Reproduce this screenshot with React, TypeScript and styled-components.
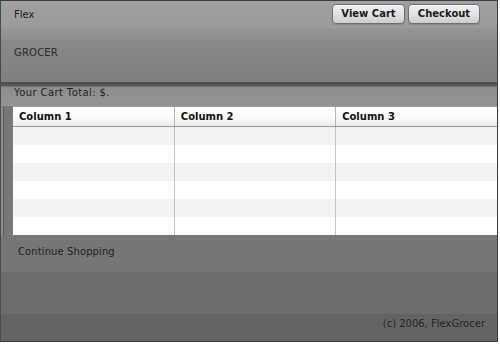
import React from 'react';
import styled, { createGlobalStyle } from 'styled-components';

const GlobalStyle = createGlobalStyle`
  html, body {
    margin: 0;
    padding: 0;
    background: #ffffff;
  }
  body {
    font-family: "DejaVu Sans", Verdana, sans-serif;
  }
`;

const Frame = styled.div`
  box-sizing: border-box;
  width: 498px;
  height: 342px;
  border: 1px solid #3c3c3c;
  border-left-color: #4a4a4a;
  box-shadow: inset 2px 0 0 #8e8e8e, inset 3px 0 0 #5a5a5a;
  display: flex;
  flex-direction: column;
  background: #777777;
  overflow: hidden;
  font-family: "DejaVu Sans", Verdana, sans-serif;
  font-size: 10px;
  color: #222222;
`;

const Header = styled.div`
  height: 81px;
  padding-left: 13px;
  display: flex;
  flex-direction: column;
  background: linear-gradient(
    to bottom,
    #a0a0a0 0px,
    #9b9b9b 27px,
    #949494 28px,
    #919191 38px,
    #898989 39px,
    #7f7f7f 81px
  );
`;

const TopBar = styled.div`
  height: 28px;
  display: flex;
  align-items: center;
  justify-content: space-between;
  padding-right: 16px;
`;

const AppName = styled.span`
  font-size: 10px;
  color: #1e1e1e;
  margin-top: -2px;
`;

const ButtonGroup = styled.div`
  display: flex;
  gap: 3px;
  margin-top: -3px;
  margin-right: 1px;
`;

const Button = styled.button<{ $width: number }>`
  box-sizing: border-box;
  width: ${p => p.$width}px;
  height: 20px;
  padding: 0;
  font-family: "DejaVu Sans", Verdana, sans-serif;
  font-weight: bold;
  font-size: 10px;
  color: #1a1a1a;
  border: 1px solid #6e6e6e;
  border-radius: 4px;
  background: linear-gradient(to bottom, #f0f0f0 0%, #e2e2e2 50%, #cdcdcd 100%);
  box-shadow: inset 0 1px 0 #fafafa, 0 1px 0 #8a8a8a;
`;

const Brand = styled.div`
  margin-top: 18px;
  font-size: 10px;
  color: #2a2a2a;
  letter-spacing: 0.2px;
`;

const Shadow = styled.div`
  height: 5px;
  background: linear-gradient(to bottom, #4c4c4c 0, #555555 3px, #7a7a7a 5px);
`;

const CartBar = styled.div`
  height: 19px;
  padding-left: 13px;
  display: flex;
  align-items: flex-start;
  background: linear-gradient(to bottom, #8e8e8e, #949494);
  color: #1e1e1e;
  line-height: 11px;
  letter-spacing: 0.4px;
`;

const GridWrap = styled.div`
  margin-left: 11px;
  background: #ffffff;
  border: 1px solid #7a7a7a;
  border-right: none;
  border-top-color: #9c9c9c;
`;

const Grid = styled.table`
  width: 100%;
  border-collapse: collapse;
  table-layout: fixed;
`;

const HeadCell = styled.th`
  height: 19px;
  padding: 0 0 0 6px;
  text-align: left;
  font-size: 10px;
  font-weight: bold;
  color: #111111;
  background: linear-gradient(to bottom, #ffffff 0%, #fbfbfb 50%, #ececec 100%);
  border-bottom: 1px solid #9a9a9a;
  border-left: 1px solid #b4b4b4;
  &:first-child {
    border-left: none;
  }
`;

const Row = styled.tr<{ $alt: boolean }>`
  height: 18px;
  background: ${p => (p.$alt ? '#f3f3f3' : '#ffffff')};
`;

const Cell = styled.td`
  padding: 0;
  border-left: 1px solid #c4c4c4;
  &:first-child {
    border-left: none;
  }
`;

const ContinueBar = styled.div`
  box-sizing: border-box;
  height: 36px;
  padding: 10px 0 0 17px;
  background: #767676;
  color: #202020;
  line-height: 12px;
  letter-spacing: 0.1px;
`;

const Filler = styled.div`
  height: 42px;
  background: #6d6d6d;
`;

const Footer = styled.div`
  flex: 1;
  display: flex;
  justify-content: flex-end;
  align-items: flex-start;
  padding: 4px 12px 0 0;
  line-height: 12px;
  background: #646464;
  color: #242424;
`;

const columns = ['Column 1', 'Column 2', 'Column 3'];
const rows = [0, 1, 2, 3, 4, 5];

export default function App() {
  return (
    <>
      <GlobalStyle />
      <Frame>
        <Header>
          <TopBar>
            <AppName>Flex</AppName>
            <ButtonGroup>
              <Button $width={73}>View Cart</Button>
              <Button $width={72}>Checkout</Button>
            </ButtonGroup>
          </TopBar>
          <Brand>GROCER</Brand>
        </Header>
        <Shadow />
        <CartBar>Your Cart Total: $.</CartBar>
        <GridWrap>
          <Grid>
            <thead>
              <tr>
                {columns.map(c => (
                  <HeadCell key={c}>{c}</HeadCell>
                ))}
              </tr>
            </thead>
            <tbody>
              {rows.map(r => (
                <Row key={r} $alt={r % 2 === 0}>
                  {columns.map(c => (
                    <Cell key={c} />
                  ))}
                </Row>
              ))}
            </tbody>
          </Grid>
        </GridWrap>
        <ContinueBar>Continue Shopping</ContinueBar>
        <Filler />
        <Footer>(c) 2006, FlexGrocer</Footer>
      </Frame>
    </>
  );
}
